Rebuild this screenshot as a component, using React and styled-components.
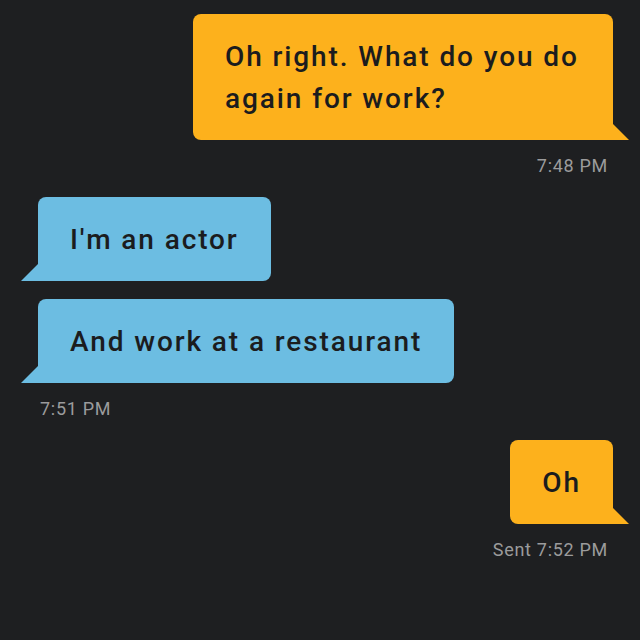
import React from "react";
import styled, { createGlobalStyle, css } from "styled-components";

const Global = createGlobalStyle`
  html, body { margin: 0; padding: 0; background: #1e1f21; }
  body { width: 640px; height: 640px; overflow: hidden; font-family: Roboto, "Noto Sans", sans-serif; }
`;

const Page = styled.div`
  width: 640px;
  height: 640px;
  box-sizing: border-box;
  padding: 14px 27px 0 38px;
  background: #1e1f21;
  display: flex;
  flex-direction: column;
`;

const Group = styled.div`
  display: flex;
  flex-direction: column;
  align-items: ${(p) => (p.$mine ? "flex-end" : "flex-start")};
  gap: 18px;
  margin-bottom: 20px;
`;

const Bubble = styled.div`
  position: relative;
  box-sizing: border-box;
  max-width: 420px;
  padding: 22px 32px 20px 32px;
  font-family: Roboto, "Noto Sans", sans-serif;
  font-weight: 500;
  font-size: 28px;
  line-height: 42px;
  letter-spacing: 1.9px;
  color: #1b1c1e;
  border-radius: 8px;
  ${(p) =>
    p.$mine
      ? css`
          background: #fdb11c;
          border-bottom-right-radius: 0;
          &::after {
            content: "";
            position: absolute;
            right: -16px;
            bottom: 0;
            width: 16px;
            height: 16px;
            background: #fdb11c;
            clip-path: polygon(0 0, 100% 100%, 0 100%);
          }
        `
      : css`
          background: #6cbde2;
          border-bottom-left-radius: 0;
          &::after {
            content: "";
            position: absolute;
            left: -17px;
            bottom: 0;
            width: 17px;
            height: 17px;
            background: #6cbde2;
            clip-path: polygon(100% 0, 100% 100%, 0 100%);
          }
        `}
`;

const Stamp = styled.div`
  font-family: Roboto, "Noto Sans", sans-serif;
  font-size: 18px;
  line-height: 22px;
  letter-spacing: 0.7px;
  color: #9b9b9c;
  margin-top: -3px;
  ${(p) => (p.$mine ? "margin-right: 5px;" : "margin-left: 2px;")}
`;

const groups = [
  { mine: true, messages: ["Oh right. What do you do again for work?"], stamp: "7:48 PM", width: 420 },
  { mine: false, messages: ["I'm an actor", "And work at a restaurant"], stamp: "7:51 PM" },
  { mine: true, messages: ["Oh"], stamp: "Sent 7:52 PM" },
];

export default function App() {
  return (
    <>
      <Global />
      <Page>
        {groups.map((g, i) => (
          <Group key={i} $mine={g.mine}>
            {g.messages.map((m, j) => (
              <Bubble key={j} $mine={g.mine} style={g.width ? { width: g.width } : undefined}>
                {m}
              </Bubble>
            ))}
            <Stamp $mine={g.mine}>{g.stamp}</Stamp>
          </Group>
        ))}
      </Page>
    </>
  );
}
